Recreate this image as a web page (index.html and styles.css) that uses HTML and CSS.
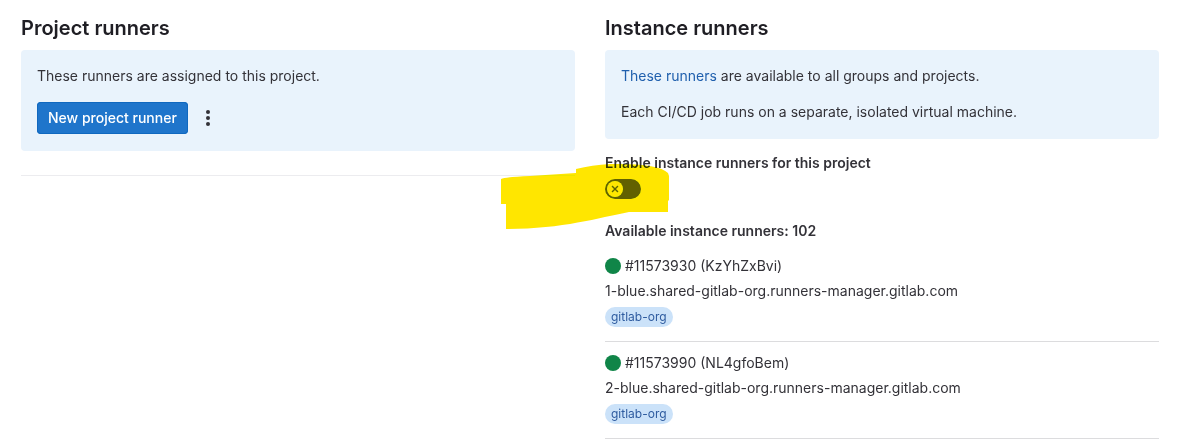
FILE: index.html
```html
<!DOCTYPE html>
<html lang="en">
<head>
<meta charset="utf-8">
<title>Runners</title>
<meta name="viewport" content="width=device-width, initial-scale=1">
<link rel="stylesheet" href="styles.css">
</head>
<body>
<main class="columns">
  <section class="column">
    <h2 class="title">Project runners</h2>
    <div class="card">
      <p class="text">These runners are assigned to this project.</p>
      <div class="actions">
        <button class="button" type="button">New project runner</button>
        <button class="menu-button" type="button" aria-label="More actions">
          <svg class="dots" viewBox="0 0 16 16" aria-hidden="true"><circle cx="8" cy="2" r="2"/><circle cx="8" cy="8" r="2"/><circle cx="8" cy="14" r="2"/></svg>
        </button>
      </div>
    </div>
    <hr class="divider">
  </section>
  <section class="column">
    <h2 class="title">Instance runners</h2>
    <div class="card">
      <p class="text"><a class="link" href="#runners">These runners</a> are available to all groups and projects.</p>
      <p class="text">Each CI/CD job runs on a separate, isolated virtual machine.</p>
    </div>
    <div class="field">
      <label class="label" for="instance-toggle">Enable instance runners for this project</label>
      <span class="toggle">
        <input class="toggle-input" id="instance-toggle" type="checkbox" role="switch">
        <svg class="toggle-icon" viewBox="0 0 16 16" aria-hidden="true"><circle cx="8" cy="8" r="8" fill="#fff"/><path d="M5 5l6 6M11 5l-6 6" stroke="#626168" stroke-width="1.500"/></svg>
      </span>
      <svg class="marker" viewBox="0 0 170 68" aria-hidden="true"><path d="M1 18Q6 16 30 15L76 12V8Q92 4 110 3Q158 2 168 12L169 15V39L168 40V51H129C98 57 62 68 6 68V43H1Z"/></svg>
    </div>
    <h3 class="label">Available instance runners: 102</h3>
    <ul class="runners" id="runners">
      <li class="runner">
        <div class="runner-name"><span class="status"></span>#11573930 (KzYhZxBvi)</div>
        <div class="runner-host">1-blue.shared-gitlab-org.runners-manager.gitlab.com</div>
        <span class="badge">gitlab-org</span>
      </li>
      <li class="runner">
        <div class="runner-name"><span class="status"></span>#11573990 (NL4gfoBem)</div>
        <div class="runner-host">2-blue.shared-gitlab-org.runners-manager.gitlab.com</div>
        <span class="badge">gitlab-org</span>
      </li>
    </ul>
  </section>
</main>
</body>
</html>
```

FILE: styles.css
```css
* {
  box-sizing: border-box;
}

body {
  margin: 0;
  background: #fff;
  color: #333238;
  font: 14px/20px Inter, "Noto Sans", sans-serif;
}

.columns {
  display: grid;
  grid-template-columns: 1fr 1fr;
  gap: 30px;
  padding: 16px 27px 0 21px;
}

.title {
  margin: 0 0 10px;
  color: #1f1e24;
  font-size: 20px;
  font-weight: 600;
  line-height: 24px;
}

.card {
  display: flex;
  flex-direction: column;
  gap: 16px;
  padding: 16px 16px 17px;
  border-radius: 4px;
  background: #e9f3fc;
}

.text {
  margin: 0;
}

.link {
  color: #1f5fad;
  text-decoration: none;
}

.actions {
  display: flex;
  gap: 4px;
}

.button {
  height: 32px;
  padding: 0 11px;
  border: 0;
  border-radius: 4px;
  background: #1f75cb;
  box-shadow: inset 0 0 0 1px #1068bf;
  color: #fff;
  font: inherit;
  font-weight: 500;
}

.menu-button {
  display: grid;
  place-items: center;
  width: 32px;
  height: 32px;
  padding: 0;
  border: 0;
  background: none;
}

.dots {
  width: 16px;
  height: 16px;
  fill: #333238;
}

.divider {
  margin: 24px 0 0;
  border: 0;
  border-top: 1px solid #ececef;
}

.field {
  position: relative;
  display: flex;
  flex-direction: column;
  gap: 6px;
  margin: 14px 0 22px;
}

.label {
  margin: 0;
  font-size: 14px;
  font-weight: 600;
}

.toggle {
  display: grid;
  align-items: center;
  width: 36px;
  height: 20px;
}

.toggle-input {
  grid-area: 1 / 1;
  width: 36px;
  height: 20px;
  margin: 0;
  border-radius: 10px;
  appearance: none;
  background: #626168;
}

.toggle-icon {
  grid-area: 1 / 1;
  width: 16px;
  height: 16px;
  margin-left: 2px;
  pointer-events: none;
}

.marker {
  position: absolute;
  top: 8px;
  left: -105px;
  width: 170px;
  height: 68px;
  fill: #ffe600;
  mix-blend-mode: darken;
  pointer-events: none;
}

.runners {
  margin: 0;
  padding: 4px 0 0;
  list-style: none;
}

.runner {
  padding: 11px 0 14px;
  border-bottom: 1px solid #dcdcde;
}

.runner-name {
  display: flex;
  align-items: center;
  gap: 4px;
  margin-bottom: 5px;
}

.runner-host {
  margin-bottom: 6px;
}

.status {
  width: 16px;
  height: 16px;
  border-radius: 50%;
  background: #108548;
}

.badge {
  display: block;
  width: fit-content;
  padding: 2px 6px;
  border-radius: 10px;
  background: #cbe2f9;
  color: #2f5ca0;
  font-size: 12px;
  line-height: 16px;
}
```
